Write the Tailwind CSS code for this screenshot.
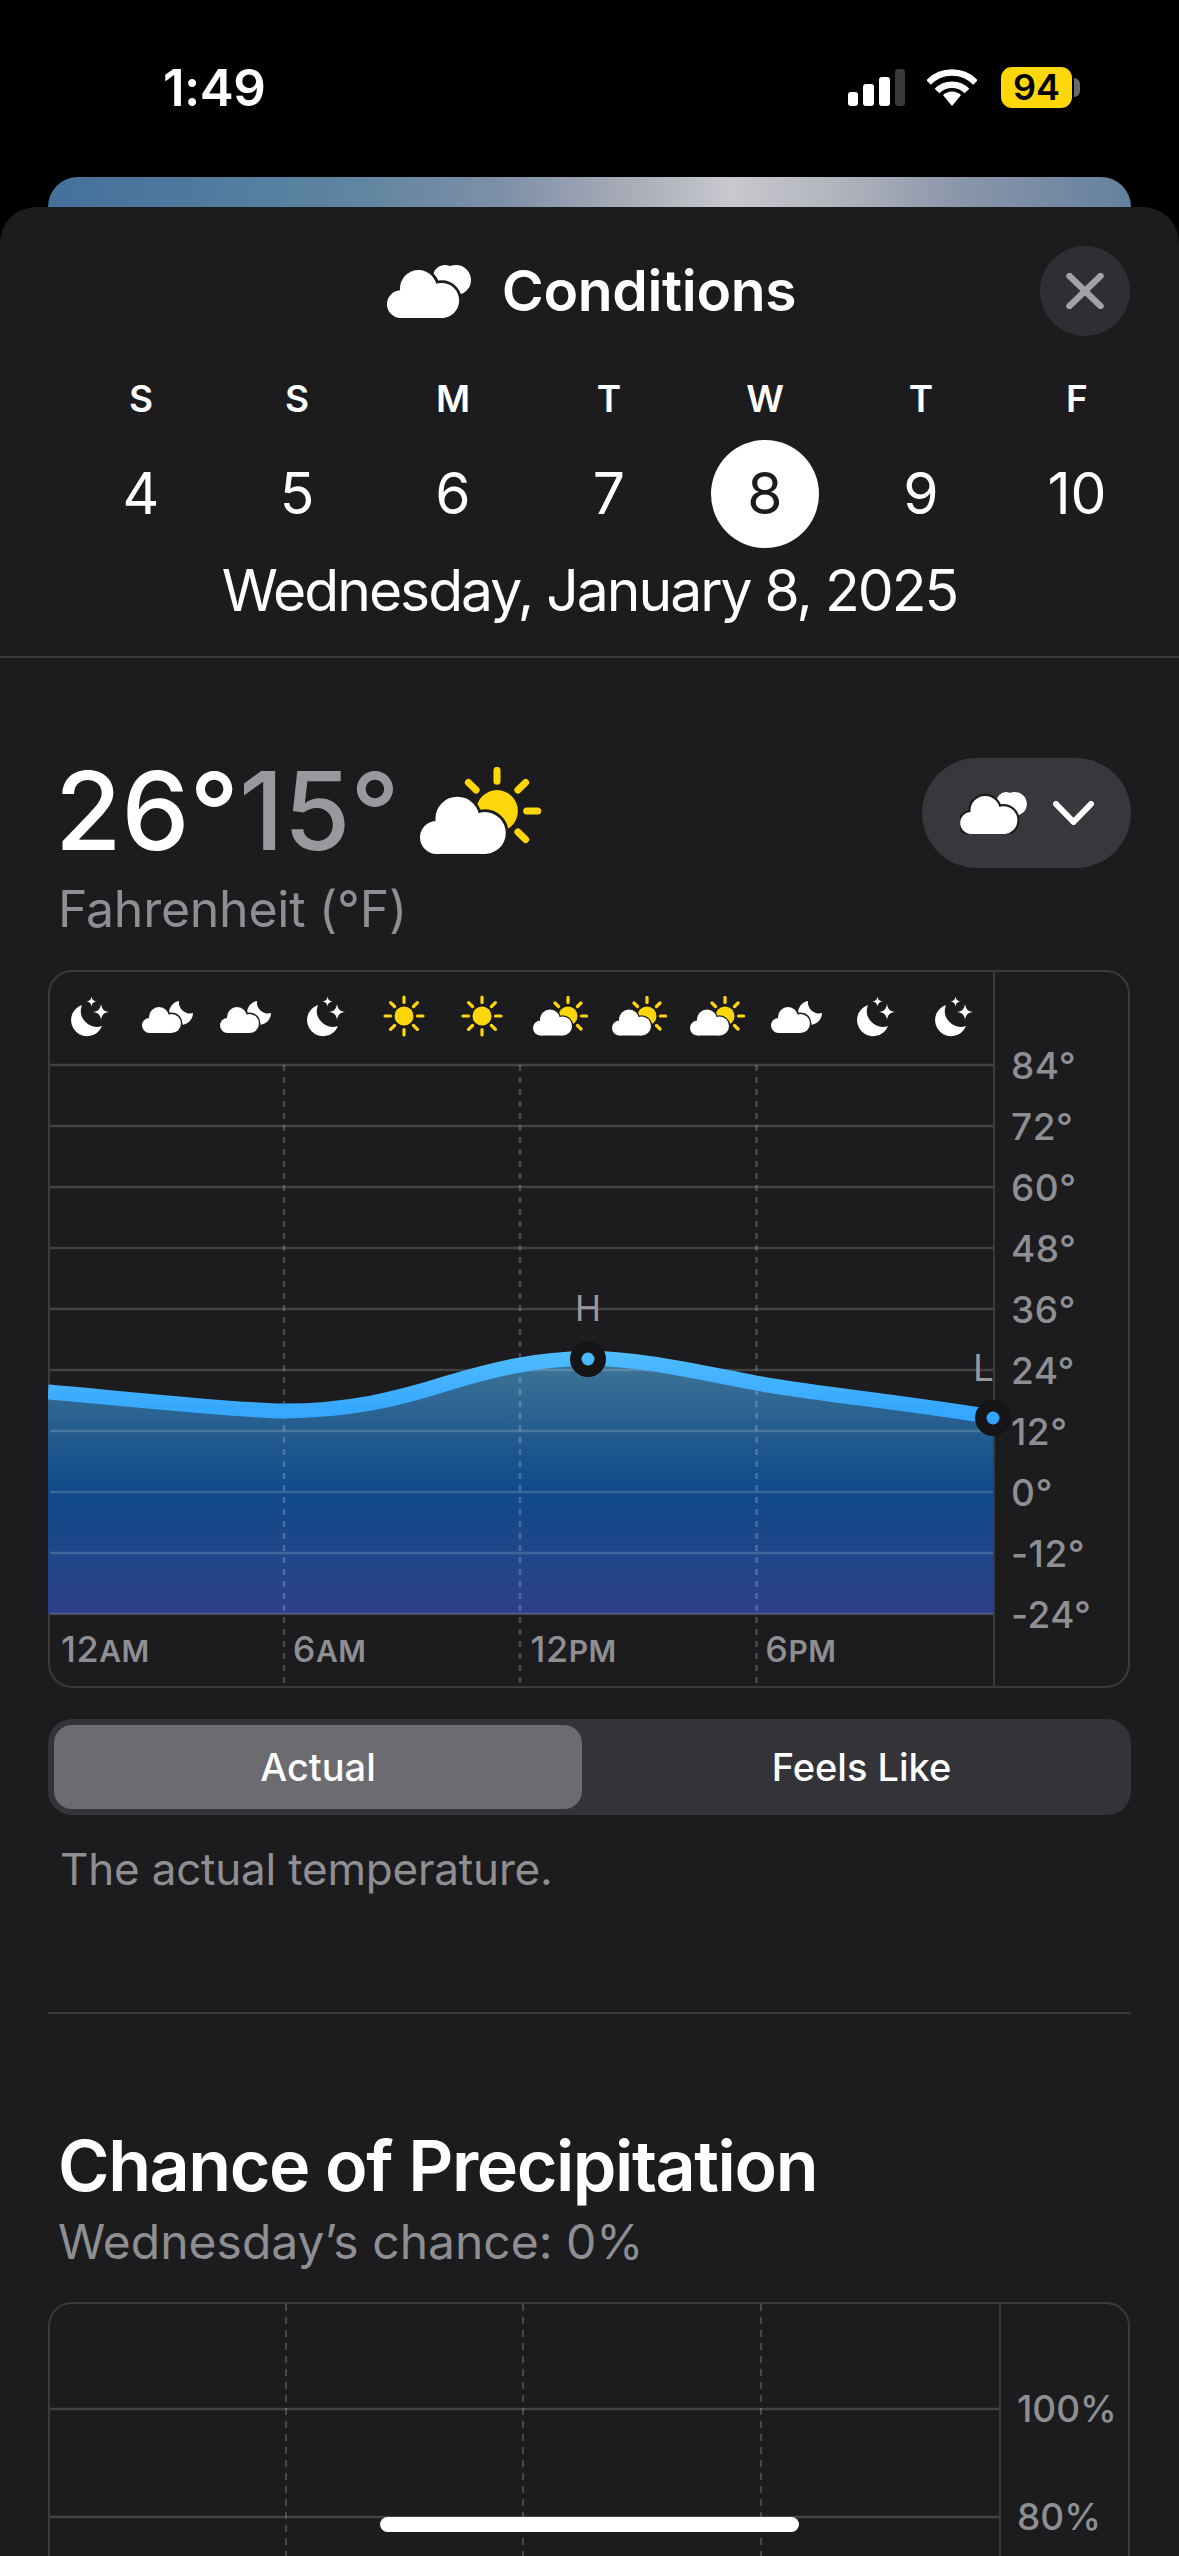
<!DOCTYPE html>
<html lang="en">
<head>
    <meta charset="UTF-8">
    <meta name="viewport" content="width=device-width, initial-scale=1.0">
    <title>Conditions</title>
    <script src="https://cdn.jsdelivr.net/npm/@tailwindcss/browser@4"></script>
</head>
<body class="bg-black">
    <!-- shared weather glyphs -->
    <svg class="absolute w-0 h-0">
        <defs>
            <g id="cl">
                <circle cx="7.5" cy="18.5" r="7.5"/>
                <circle cx="17" cy="10" r="10"/>
                <circle cx="29.5" cy="16.5" r="9.5"/>
                <rect x="7.5" y="14" width="22" height="12"/>
            </g>
            <path id="star-big" d="M31 8Q31.6 15.4 39 16Q31.6 16.6 31 24Q30.4 16.6 23 16Q30.4 15.4 31 8Z"/>
            <path id="star-small" d="M21.5 0.5Q22 5 26.5 5.5Q22 6 21.5 10.5Q21 6 16.5 5.5Q21 5 21.5 0.5Z"/>
        </defs>
        <symbol id="moon-stars" viewBox="0 0 39 41">
            <path fill="#fff" d="M12 9A16 16 0 1 0 32 30A16 16 0 0 1 12 9Z"/>
            <use href="#star-big" fill="#fff"/>
            <use href="#star-small" fill="#fff"/>
        </symbol>
        <symbol id="cloud-moon" viewBox="0 0 52 33">
            <path fill="#fff" d="M37 1A12 12 0 1 0 51 13A11 11 0 0 1 37 1Z"/>
            <g transform="translate(0 7)">
                <use href="#cl" fill="#1c1c1e" stroke="#1c1c1e" stroke-width="3"/>
                <use href="#cl" fill="#fff"/>
            </g>
        </symbol>
        <symbol id="sun" viewBox="0 0 42 42">
            <circle cx="21" cy="21" r="9.5" fill="#ffd60a"/>
            <path stroke="#ffd60a" stroke-width="3.2" stroke-linecap="round" d="M21 2V7.5M21 34.5V40M2 21H7.5M34.5 21H40M7.6 7.6L11.5 11.5M30.5 30.5L34.4 34.4M34.4 7.6L30.5 11.5M11.5 30.5L7.6 34.4"/>
        </symbol>
        <symbol id="cloud-sun" viewBox="0 0 55 40">
            <circle cx="35" cy="20" r="9.5" fill="#ffd60a"/>
            <path stroke="#ffd60a" stroke-width="3.2" stroke-linecap="round" d="M35 6.5V1.5M25.5 10.5L22 7M44.5 10.5L48 7M48.5 20H53.5M44.5 29.5L48 33"/>
            <g transform="translate(0 13.5)">
                <use href="#cl" fill="#1c1c1e" stroke="#1c1c1e" stroke-width="2.5"/>
                <use href="#cl" fill="#fff"/>
            </g>
        </symbol>
        <symbol id="clouds" viewBox="0 0 84 53">
            <circle cx="69" cy="15" r="15" fill="#fff"/>
            <circle cx="58" cy="12" r="12" fill="#fff"/>
            <g transform="translate(0 5) scale(1.85)">
                <use href="#cl" fill="#1c1c1e" stroke="#1c1c1e" stroke-width="3"/>
                <use href="#cl" fill="#fff"/>
            </g>
        </symbol>
    </svg>

    <div class="relative w-[1179px] h-[2556px] overflow-hidden bg-black font-['Inter',sans-serif]">

        <!-- status bar -->
        <div class="flex items-center justify-between h-[41px] mt-[67px] mb-[69px] pl-[163px] pr-[99px]">
            <span class="text-[51px] leading-[41px] font-semibold text-white tracking-[-0.5px]">1:49</span>
            <div class="flex items-center">
                <div class="flex items-end gap-[5px] h-[37px]">
                    <div class="w-[10px] h-[14px] rounded-[3px] bg-white"></div>
                    <div class="w-[11px] h-[22px] rounded-[3px] bg-white"></div>
                    <div class="w-[11px] h-[29px] rounded-[3px] bg-white"></div>
                    <div class="w-[10px] h-[37px] rounded-[3px] bg-[#3a3a3c]"></div>
                </div>
                <svg class="w-[50px] h-[37px] ml-[22px]" viewBox="0 0 50 37" fill="none">
                    <path stroke="#fff" stroke-width="6.5" d="M1.5 13.5A32.5 32.5 0 0 1 48.5 13.5"/>
                    <path stroke="#fff" stroke-width="6.5" d="M10 22A21 21 0 0 1 40 22"/>
                    <path fill="#fff" d="M25 37L16 26A13 13 0 0 1 34 26Z"/>
                </svg>
                <div class="flex items-center justify-center w-[71px] h-[41px] ml-[24px] rounded-[11px] bg-[#ffd60a] text-[36px] leading-[41px] font-semibold text-black">94</div>
                <div class="w-[6px] h-[19px] ml-[2px] rounded-r-full bg-[#6a6a6e]"></div>
            </div>
        </div>

        <!-- card behind the sheet -->
        <div class="h-[80px] -mb-[50px] mx-[48px] rounded-t-[30px] bg-[linear-gradient(90deg,#44709c_0%,#527a9e_15%,#5c84a0_27%,#7e8fa8_42%,#a9adb7_54%,#c8c9ce_63%,#b4b6be_72%,#8b96aa_84%,#64809f_100%)]"></div>

        <!-- sheet -->
        <div class="relative rounded-t-[36px] bg-[#1c1c1e] pt-[39px] h-[2349px]">
            <div class="relative flex items-center justify-center gap-[31px] h-[90px] pl-[4px]">
                <svg class="w-[84px] h-[53px]"><use href="#clouds"/></svg>
                <span class="text-[57px] leading-[68px] font-semibold text-white tracking-[-0.35px]">Conditions</span>
                <button class="absolute right-[49px] top-0 flex items-center justify-center w-[90px] h-[90px] rounded-full bg-[#2f2f33]">
                    <svg class="w-[38px] h-[36px]" viewBox="0 0 38 36" fill="none">
                        <path stroke="#a1a1a6" stroke-width="6.5" stroke-linecap="round" d="M3.5 3L34.5 33M34.5 3L3.5 33"/>
                    </svg>
                </button>
            </div>

            <!-- week strip -->
            <div class="grid grid-cols-7 w-[1092px] ml-[63px] mt-[41px] text-white text-center">
                <div class="text-[37px] leading-[44px] font-semibold">S</div>
                <div class="text-[37px] leading-[44px] font-semibold">S</div>
                <div class="text-[37px] leading-[44px] font-semibold">M</div>
                <div class="text-[37px] leading-[44px] font-semibold">T</div>
                <div class="text-[37px] leading-[44px] font-semibold">W</div>
                <div class="text-[37px] leading-[44px] font-semibold">T</div>
                <div class="text-[37px] leading-[44px] font-semibold">F</div>
            </div>
            <div class="grid grid-cols-7 w-[1092px] ml-[63px] mt-[19px] text-white text-[57px]">
                <div class="flex items-center justify-center h-[108px]">4</div>
                <div class="flex items-center justify-center h-[108px]">5</div>
                <div class="flex items-center justify-center h-[108px]">6</div>
                <div class="flex items-center justify-center h-[108px]">7</div>
                <div class="flex items-center justify-center h-[108px]"><span class="flex items-center justify-center w-[108px] h-[108px] rounded-full bg-white text-[#1c1c1e]">8</span></div>
                <div class="flex items-center justify-center h-[108px]">9</div>
                <div class="flex items-center justify-center h-[108px]">10</div>
            </div>
            <div class="mt-[9px] pb-[31px] text-center text-[57px] leading-[68px] text-white tracking-[-2px] border-b-2 border-[#3a3a3c]">Wednesday, January 8, 2025</div>

            <div class="px-[48px] pt-[100px]">
                <!-- temperature -->
                <div class="flex items-start justify-between h-[110px]">
                    <div class="flex items-center pl-[7px]">
                        <span class="text-[108px] leading-[105px] font-medium text-white">26°</span>
                        <span class="text-[108px] leading-[105px] font-medium text-[#98989d]">15°</span>
                        <svg class="w-[123px] h-[88px] ml-[19px]"><use href="#cloud-sun"/></svg>
                    </div>
                    <button class="flex items-center justify-center gap-[26px] w-[209px] h-[110px] rounded-[55px] bg-[#38383c]">
                        <svg class="w-[67px] h-[42px]"><use href="#clouds"/></svg>
                        <svg class="w-[41px] h-[24px]" viewBox="0 0 41 24" fill="none">
                            <path stroke="#fff" stroke-width="6" stroke-linecap="round" stroke-linejoin="round" d="M3 3L20.5 21L38 3"/>
                        </svg>
                    </button>
                </div>
                <div class="mt-[12px] pl-[10px] text-[50px] leading-[58px] tracking-[-0.25px] text-[#8e8e93]">Fahrenheit (°F)</div>

                <!-- temperature chart -->
                <div class="relative flex w-[1082px] h-[718px] mt-[32px] border-2 border-[#3a3a3c] rounded-[24px]">
                    <div class="flex flex-col justify-between w-[943px] h-full">
                        <div class="grid grid-cols-12 justify-items-center items-center h-[86px] pt-[2px]">
                            <svg class="w-[39px] h-[41px]"><use href="#moon-stars"/></svg>
                            <svg class="w-[52px] h-[33px]"><use href="#cloud-moon"/></svg>
                            <svg class="w-[52px] h-[33px]"><use href="#cloud-moon"/></svg>
                            <svg class="w-[39px] h-[41px]"><use href="#moon-stars"/></svg>
                            <svg class="w-[42px] h-[42px]"><use href="#sun"/></svg>
                            <svg class="w-[42px] h-[42px]"><use href="#sun"/></svg>
                            <svg class="w-[55px] h-[40px]"><use href="#cloud-sun"/></svg>
                            <svg class="w-[55px] h-[40px]"><use href="#cloud-sun"/></svg>
                            <svg class="w-[55px] h-[40px]"><use href="#cloud-sun"/></svg>
                            <svg class="w-[52px] h-[33px]"><use href="#cloud-moon"/></svg>
                            <svg class="w-[39px] h-[41px]"><use href="#moon-stars"/></svg>
                            <svg class="w-[39px] h-[41px]"><use href="#moon-stars"/></svg>
                        </div>
                        <div class="grid grid-cols-4 pb-[15px] text-[36px] leading-[40px] font-medium tracking-[0.5px] text-[#8e8e93]">
                            <div class="pl-[11px]">12<span class="text-[30px] font-semibold">AM</span></div>
                            <div class="pl-[7px]">6<span class="text-[30px] font-semibold">AM</span></div>
                            <div class="pl-[9px]">12<span class="text-[30px] font-semibold">PM</span></div>
                            <div class="pl-[8px]">6<span class="text-[30px] font-semibold">PM</span></div>
                        </div>
                    </div>
                    <div class="flex-1 flex flex-col pt-[63px] pl-[16px] border-l-2 border-[#3a3a3c] text-[37px] font-medium tracking-[0.5px] text-[#8e8e93]">
                        <div class="flex items-center h-[61px]">84°</div>
                        <div class="flex items-center h-[61px]">72°</div>
                        <div class="flex items-center h-[61px]">60°</div>
                        <div class="flex items-center h-[61px]">48°</div>
                        <div class="flex items-center h-[61px]">36°</div>
                        <div class="flex items-center h-[61px]">24°</div>
                        <div class="flex items-center h-[61px]">12°</div>
                        <div class="flex items-center h-[61px]">0°</div>
                        <div class="flex items-center h-[61px]">-12°</div>
                        <div class="flex items-center h-[61px]">-24°</div>
                    </div>

                    <svg class="absolute -left-[2px] -top-[2px] w-[1082px] h-[718px]" viewBox="0 0 1082 718" fill="none">
                        <defs>
                            <linearGradient id="tempFill" gradientUnits="userSpaceOnUse" x1="0" y1="388" x2="0" y2="644">
                                <stop offset="0" stop-color="#3f7698"/>
                                <stop offset="0.28" stop-color="#245d8e"/>
                                <stop offset="0.52" stop-color="#0f4a8b"/>
                                <stop offset="0.76" stop-color="#20468a"/>
                                <stop offset="1" stop-color="#2c4088"/>
                            </linearGradient>
                            <linearGradient id="tempLine" gradientUnits="userSpaceOnUse" x1="0" y1="380" x2="0" y2="455">
                                <stop offset="0" stop-color="#50bdff"/>
                                <stop offset="1" stop-color="#31a2ff"/>
                            </linearGradient>
                            <clipPath id="plot"><rect x="0" y="0" width="945" height="718"/></clipPath>
                        </defs>
                        <path fill="url(#tempFill)" d="M0 422C40 425 190 441 236 441C300 441 350 429 400 413C450 398 490 389 540 388.5C590 388 650 402 708 413C770 424 860 433 945 447V644H0Z"/>
                        <g stroke="#fff" stroke-opacity="0.17" stroke-width="2.6">
                            <path d="M2 95H945M2 156H945M2 217H945M2 278H945M2 339H945M2 400H945M2 461H945M2 522H945M2 583H945M2 644H945"/>
                            <path stroke-opacity="0.2" stroke-dasharray="6 6" d="M236 95V716M472 95V716M708.5 95V716"/>
                        </g>
                        <path clip-path="url(#plot)" stroke="url(#tempLine)" stroke-width="15" d="M0 422C40 425 190 441 236 441C300 441 350 429 400 413C450 398 490 389 540 388.5C590 388 650 402 708 413C770 424 860 433 945 447"/>
                        <circle cx="540" cy="389" r="18" fill="#151517"/>
                        <circle cx="540" cy="389" r="6.5" fill="#4ab9ff"/>
                        <circle cx="945" cy="448" r="18" fill="#151517"/>
                        <circle cx="945" cy="448" r="6.5" fill="#33a5ff"/>
                    </svg>
                    <span class="absolute left-[525px] top-[316px] text-[35px] leading-[40px] text-[#98989d]">H</span>
                    <span class="absolute left-[923px] top-[376px] text-[37px] leading-[40px] text-[#98989d]">L</span>
                </div>

                <!-- actual / feels like -->
                <div class="flex h-[96px] mt-[31px] p-[6px] rounded-[24px] bg-[#333338] text-[38px] font-medium text-white">
                    <div class="flex items-center justify-center w-[528px] rounded-[18px] bg-[#6b6b70]">Actual</div>
                    <div class="flex-1 flex items-center justify-center pl-[16px]">Feels Like</div>
                </div>
                <p class="mt-[28px] pl-[12px] text-[44px] leading-[52px] tracking-[-0.2px] text-[#8e8e93]">The actual temperature.</p>
                <div class="h-[2px] mt-[117px] bg-[#3a3a3c]"></div>

                <!-- precipitation -->
                <h2 class="mt-[110px] pl-[10px] text-[70px] leading-[84px] font-semibold text-white tracking-[-1.45px]">Chance of Precipitation</h2>
                <p class="mt-[4px] pl-[10px] text-[48px] leading-[60px] text-[#8e8e93]">Wednesday’s chance: 0%</p>
                <div class="relative flex w-[1082px] h-[500px] mt-[30px] border-2 border-[#3a3a3c] rounded-[24px]">
                    <div class="w-[949px]"></div>
                    <div class="flex-1 flex flex-col pt-[51px] pl-[16px] border-l-2 border-[#3a3a3c] text-[37px] font-medium text-[#8e8e93]">
                        <div class="flex items-center h-[108px]">100%</div>
                        <div class="flex items-center h-[108px]">80%</div>
                    </div>
                    <svg class="absolute -left-[2px] -top-[2px] w-[951px] h-[500px]" viewBox="0 0 951 500" fill="none">
                        <path stroke="#fff" stroke-opacity="0.17" stroke-width="2.6" d="M2 107H951M2 215H951M2 323H951"/>
                        <path stroke="#fff" stroke-opacity="0.2" stroke-width="2" stroke-dasharray="7 6" d="M238 2V500M475 2V500M713 2V500"/>
                    </svg>
                </div>
            </div>
        </div>

        <!-- home indicator -->
        <div class="absolute left-[380px] bottom-[24px] w-[419px] h-[15px] rounded-full bg-white"></div>
    </div>
</body>
</html>
